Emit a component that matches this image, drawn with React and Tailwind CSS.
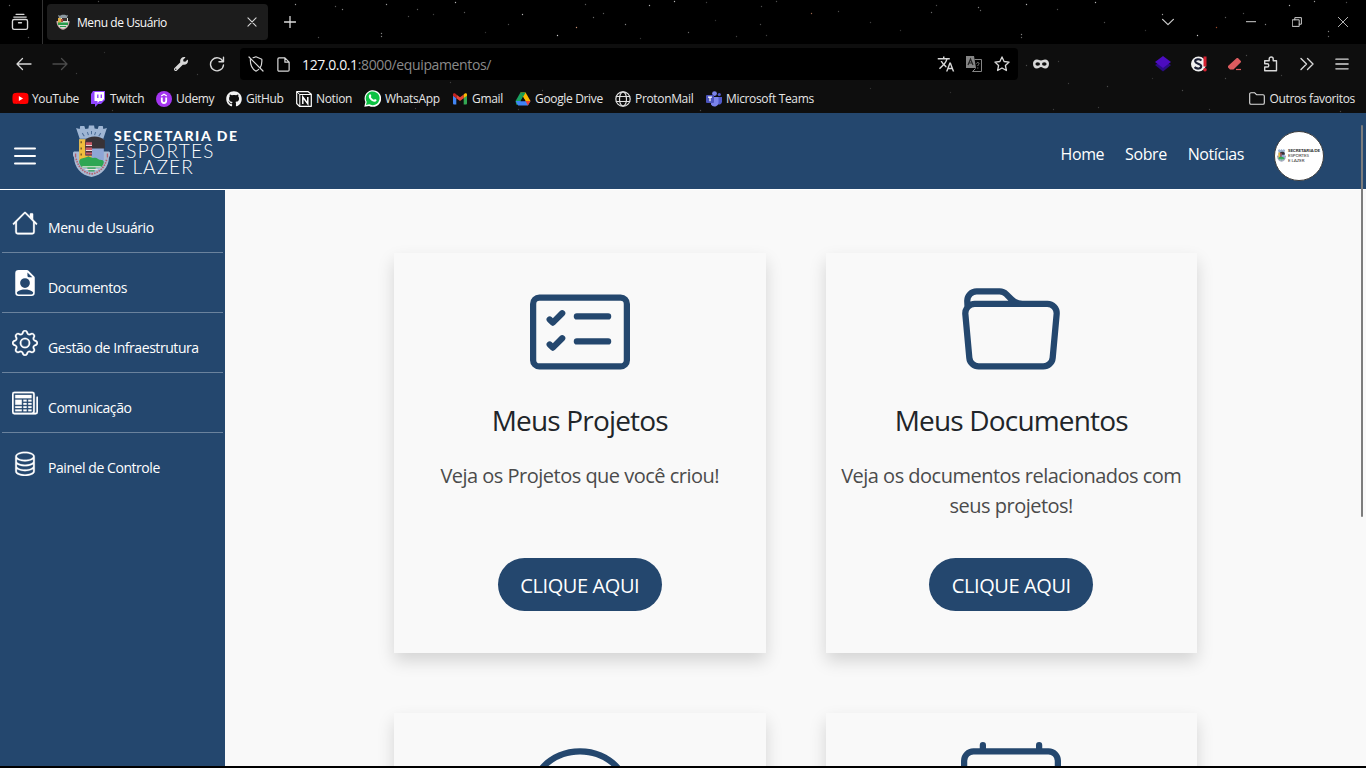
import React from "react";
import {
  BsFileEarmarkPersonFill, BsGear, BsNewspaper, BsDatabase, BsCardChecklist,
  BsFolder, BsChat, BsCalendar4,
} from "react-icons/bs";
import { FaYoutube, FaGithub, FaWrench } from "react-icons/fa";
import { MdTranslate } from "react-icons/md";

const STARS = [
  [386, 4, 0.6], [455, 2, 0.7], [522, 14, 0.7], [585, 4, 0.35], [576, 27, 0.9, "#e0a080"], [557, 35, 0.8], [593, 17, 0.4],
  [603, 13, 0.35], [649, 5, 0.7], [674, 1, 0.7], [625, 24, 0.5], [381, 33, 0.5], [381, 36, 0.5], [417, 9, 0.35], [408, 16, 0.3],
  [342, 9, 0.5], [464, 12, 0.35], [433, 14, 0.25], [508, 24, 0.3], [688, 32, 0.4], [706, 2, 0.25], [761, 6, 0.3], [811, 13, 0.8, "#c08060"],
  [776, 1, 0.3], [760, 24, 0.3], [766, 35, 0.25], [736, 36, 0.25], [838, 11, 0.3], [295, 4, 0.6], [335, 6, 0.35], [318, 37, 0.3],
  [98, 1, 0.3], [9, 5, 0.4], [28, 37, 0.3], [931, 12, 0.4], [980, 10, 0.4], [978, 7, 0.5], [1026, 4, 0.7], [1021, 34, 0.5],
  [1021, 37, 0.4], [1057, 9, 0.3], [1095, 2, 0.7], [1104, 22, 0.3], [1162, 14, 0.6], [1197, 35, 0.8], [1216, 27, 0.9, "#b05030"],
  [1289, 5, 0.7], [1314, 1, 0.6], [1265, 24, 0.5], [1328, 31, 0.5], [1328, 36, 0.4], [1225, 17, 0.35], [1346, 2, 0.3], [1243, 13, 0.3],
  [870, 22, 0.25], [900, 30, 0.2], [936, 5, 0.3], [485, 32, 0.2], [640, 38, 0.2], [715, 20, 0.2], [1145, 30, 0.2],
  [76, 73, 0.2], [197, 74, 0.2], [104, 52, 0.15], [112, 110, 0.2], [415, 108, 0.2], [518, 109, 0.2], [542, 90, 0.2], [700, 110, 0.25],
  [450, 82, 0.2], [1026, 65, 0.25], [1058, 61, 0.2], [1068, 83, 0.2], [1107, 86, 0.25], [1182, 90, 0.25], [1225, 78, 0.25], [1246, 55, 0.25],
  [1098, 107, 0.2], [1053, 109, 0.2], [1209, 109, 0.2], [1281, 75, 0.2], [1340, 111, 0.25], [1152, 78, 0.15], [950, 92, 0.15], [870, 88, 0.15],
];

function Stars() {
  return (
    <svg className="pointer-events-none absolute inset-0" width="1366" height="113" aria-hidden="true">
      {STARS.map(([x, y, o, c], i) => (
        <circle key={i} cx={x + 0.5} cy={y + 0.5} r="0.7" fill={c || "#ffffff"} opacity={o} />
      ))}
    </svg>
  );
}

function Stroke({ size = 16, width = 1.3, className = "", children }) {
  return (
    <svg width={size} height={size} viewBox="0 0 16 16" fill="none" stroke="currentColor" strokeWidth={width}
      strokeLinecap="round" strokeLinejoin="round" className={"shrink-0 " + className}>
      {children}
    </svg>
  );
}

function Crest({ className }) {
  return (
    <svg viewBox="0 0 36 52" className={className} preserveAspectRatio="none">
      <path d="M3 3l3.500 1 .5-3 4 0 1 3 3-.5.500-3h5l.5 3 3 .5 1-3 4 0 .5 3 3.500-1-3.500 10.500H6.500z" fill="#9fb6d4" />
      <path d="M9 8l2 3M14 7l1 3M22 7l-1 3M27 8l-2 3M18 6v3" stroke="#4d6d96" strokeWidth="1" />
      <path d="M1 26c-2 1-1 5 0 6 0 9 7 18 17 19 10-1 17-10 17-19 1-1 2-5 0-6z" fill="#a9bad2" />
      <path d="M3 33c2 8 7 14 15 15 8-1 13-7 15-15" fill="none" stroke="#b6606e" strokeWidth="1.600" strokeDasharray="1.500 1" />
      <path d="M2.500 28v4M33.500 28v4" stroke="#b6606e" strokeWidth="1.300" />
      <path d="M6 14h24v20c0 6-6 10-12 11-6-1-12-5-12-11z" fill="#8fa6d6" />
      <path d="M11 15c5-5 15-5 20 0v8H11z" fill="#383236" />
      <path d="M6 14h6v16h6v5H6z" fill="#f0be3c" />
      <path d="M8 16v2M8 22v2M8 28v2M15 31v2" stroke="#80602b" strokeWidth="1.500" />
      <path d="M12 16h6.500v14H12z" fill="#46303a" />
      <path d="M12.500 17h6v2.500h-6zM12.500 22h6v2.500h-6zM12.500 27h6v2h-6z" fill="#c85a66" />
      <path d="M12.500 19.500h6v1h-6zM12.500 24.500h6v1h-6z" fill="#e8d9d9" />
      <path d="M6 36c1-4 4-3 6-4s4-1 6 0 4-1 6 1 5 0 6 3c0 3-2 5-4 6H10c-2-1-4-3-4-6z" fill="#2ea653" />
      <path d="M9 41h18M12 43.500h12" stroke="#e9e9e0" strokeWidth="1.300" />
      <path d="M14 42.300h8M15 45h6" stroke="#2ea653" strokeWidth="1.200" />
    </svg>
  );
}

function Favicon() {
  return (
    <svg width="16" height="16" viewBox="0 0 16 16" className="shrink-0">
      <path d="M3 1l2 .8L7 .8h3l1.500.8L13 1l-1 3H4z" fill="#8b98a0" />
      <path d="M1.500 7h13c0 5-3 8-6.500 8.800C4.500 15 1.500 12 1.500 7z" fill="#c9a9a9" />
      <path d="M3 4h10v5c0 3-2 4.500-5 5.500C5 13.500 3 12 3 9z" fill="#d8e3d8" />
      <path d="M7 4h5v3H7z" fill="#3d3430" /><path d="M3 4h3v5H3z" fill="#e2b04a" /><path d="M6 5h2v3H6z" fill="#b64c3e" />
      <path d="M3 8.500h10v2.500H3zM5 12h6v1H5z" fill="#289a4a" />
    </svg>
  );
}

const TwitchIcon = () => (
  <svg width="16" height="16" viewBox="0 0 16 16"><path d="M3 0h12v9l-4 4H8l-3 3v-3H1V3z" fill="#9146ff" /><path d="M4.500 1H14v7l-2 2H9.500L7.500 12v-2h-3z" fill="#fff" /><path d="M7.800 3.500v3.500M11.300 3.500v3.500" stroke="#9146ff" strokeWidth="1.400" /></svg>
);
const UdemyIcon = () => (
  <svg width="16" height="16" viewBox="0 0 16 16"><circle cx="8" cy="8" r="8" fill="#a435f0" /><path d="M5.200 5L8 3.300 10.800 5" stroke="#fff" strokeWidth="1.300" fill="none" /><path d="M5.800 6.500v3.300a2.200 2.200 0 0 0 4.400 0V6.500" stroke="#fff" strokeWidth="1.800" fill="none" /></svg>
);
const NotionIcon = () => (
  <svg width="16" height="16" viewBox="0 0 16 16"><path d="M.7.700h11.500l3.100 2.500v12.100H3.500L.7 12.500z" fill="#111" stroke="#fff" strokeWidth="1.200" strokeLinejoin="round" /><path d="M1 1l2.800 2.500h11.500M3.800 3.500v11.500" stroke="#fff" fill="none" /><path d="M6.800 13V6l5 6.800V6" stroke="#fff" strokeWidth="1.500" fill="none" /></svg>
);
const WhatsIcon = () => (
  <svg width="17" height="17" viewBox="0 0 16 16" className="-ml-px shrink-0"><path d="M.3 15.700l1-4.300A7.800 7.800 0 1 1 4.800 15z" fill="#fff" /><path d="M1.800 14.200l.8-3A6.500 6.500 0 1 1 5 13.500z" fill="#0dc143" /><path d="M5.200 4.300c.8-.6 1.200-.1 1.700 1.200.2.500-.5.800-.4 1.200.6 1.200 1.500 2 2.700 2.500.4.100.8-.9 1.200-.8 1.400.6 1.700.8 1.300 1.700-.6 1.300-2.600 1.200-4.500-.1C5 8.700 3.600 6 5.200 4.300z" fill="#fff" /></svg>
);
const GmailIcon = () => (
  <svg width="16" height="16" viewBox="0 0 16 16"><path d="M1 4.500l3.300 2.500v6.500H2a1 1 0 0 1-1-1z" fill="#4285f4" /><path d="M15 4.500L11.700 7v6.500H14a1 1 0 0 0 1-1z" fill="#34a853" /><path d="M4.300 3.400L8 6.200l3.700-2.800V7.200L8 10 4.300 7.200z" fill="#ea4335" /><path d="M1 3.600C1 2.300 2.500 1.900 3.500 2.700l.8.700v3.800L1 4.800z" fill="#c5221f" /><path d="M15 3.600c0-1.300-1.500-1.700-2.500-.9l-.8.700v3.800L15 4.800z" fill="#fbbc04" /></svg>
);
const DriveIcon = () => (
  <svg width="16" height="16" viewBox="0 0 16 16"><path d="M5.400 1.500L8 6 3.600 14 1.200 13.500.6 10z" fill="#1aa260" /><path d="M5.400 1.500h5.200l4.900 8.600h-5L8 6z" fill="#ffba00" /><path d="M5.400 1.500h5.200L8 6z" fill="#0f9d58" /><path d="M.6 10h14.900l-2.600 4.400H3.200z" fill="#3f83f8" /><path d="M8 6l2.500 4.200h-5z" fill="#0e0e0e" /><path d="M10.500 10h5l-2.600 4.400z" fill="#ea4335" /></svg>
);
const GlobeIcon = () => (
  <Stroke width={1.2} className="text-[#e0e0e0]"><circle cx="8" cy="8" r="7.200" /><ellipse cx="8" cy="8" rx="3.500" ry="7.200" /><path d="M1.300 5.500h13.400M1.300 10.500h13.400" /></Stroke>
);
const TeamsIcon = () => (
  <svg width="16" height="16" viewBox="0 0 16 16"><circle cx="8.500" cy="2.600" r="2.400" fill="#7b83eb" /><circle cx="13.300" cy="3.500" r="1.600" fill="#5059c9" /><path d="M11 6h5v4.500a3 3 0 0 1-4 2.800z" fill="#5059c9" /><path d="M5 6h7.500v5.500a4 4 0 0 1-7.500 2z" fill="#7b83eb" /><rect x="0" y="4" width="8" height="8" rx="1" fill="#4b53bc" /><path d="M2 6.200h4M4 6.200V10.300" stroke="#fff" strokeWidth="1.200" /></svg>
);
const FolderSmall = () => (
  <Stroke width={1.1} className="text-[#e0e0e0]"><path d="M.7 12V3A1.300 1.300 0 0 1 2 1.700h3.500L7.500 3.700H14A1.300 1.300 0 0 1 15.300 5v7a1.300 1.300 0 0 1-1.300 1.300H2A1.300 1.300 0 0 1 .7 12z" /></Stroke>
);

const BOOKMARKS = [
  ["YouTube", "w-[78px]", <FaYoutube size={17} color="#ff0000" key="i" className="shrink-0 bg-[radial-gradient(circle,#fff_25%,transparent_26%)]" />],
  ["Twitch", "w-[66px]", <TwitchIcon key="i" />],
  ["Udemy", "w-[70px]", <UdemyIcon key="i" />],
  ["GitHub", "w-[70px]", <FaGithub size={16} color="#f2f2f2" key="i" />],
  ["Notion", "w-[69px]", <NotionIcon key="i" />],
  ["WhatsApp", "w-[87px]", <WhatsIcon key="i" />],
  ["Gmail", "w-[63px]", <GmailIcon key="i" />],
  ["Google Drive", "w-[100px]", <DriveIcon key="i" />],
  ["ProtonMail", "w-[91px]", <GlobeIcon key="i" />],
  ["Microsoft Teams", "w-[110px]", <TeamsIcon key="i" />],
];

function TabStrip() {
  return (
    <div className="flex h-[44px] items-center">
      <div className="flex h-full w-[43px] items-center border-r border-[#333] pl-[11px] text-[#d8d8d8]">
        <Stroke size={18} width={1.2}>
          <path d="M4.500 1.200h7M2.500 3.600h11" /><rect x="1.300" y="5.800" width="13.400" height="8.700" rx="1.500" /><path d="M6.700 8.700h2.600" />
        </Stroke>
      </div>
      <div className="ml-1 flex h-9 w-[221px] items-center rounded bg-[#1c1c1c] pl-2 pr-[11px]">
        <Favicon />
        <span className="ml-1.5 grow pt-px text-[12px] tracking-[-0.42px] text-[#fafafa]">Menu de Usuário</span>
        <Stroke size={10} width={1.7} className="text-[#d8d8d8]"><path d="M1.500 1.500l13 13M14.500 1.500l-13 13" /></Stroke>
      </div>
      <Stroke size={12} width={1.7} className="ml-4 text-[#dcdcdc]"><path d="M8 .5v15M.5 8h15" /></Stroke>
      <div className="ml-auto flex items-center text-[#cfcfcf]">
        <Stroke size={12} width={1.6} className="mr-[72px]"><path d="M.8 4.500L8 11.500l7.200-7" /></Stroke>
        <Stroke size={10} width={1.6} className="mr-[36px]"><path d="M.5 7.500h15" /></Stroke>
        <Stroke size={10} width={1.6} className="mr-[36px]"><path d="M1 4.500h10.500V15H1zM4.500 4.500V1H15v10.500h-3.500" /></Stroke>
        <Stroke size={10} width={1.4} className="mr-[18px]"><path d="M.5.5l15 15M15.500.5l-15 15" /></Stroke>
      </div>
    </div>
  );
}

function AddressBar() {
  return (
    <div className="flex h-10 items-center text-[#d8d8d8]">
      <Stroke className="ml-4" width={1.3}><path d="M1 8h14M6.500 2.500L1 8l5.500 5.500" /></Stroke>
      <Stroke className="ml-5 text-[#4b4b4b]" width={1.3}><path d="M1 8h14M9.500 2.500L15 8l-5.500 5.500" /></Stroke>
      <FaWrench size={14} className="ml-[106px]" />
      <Stroke className="ml-[21px]" width={1.4}><path d="M13.900 5.500A6.500 6.500 0 1 0 14.500 9M14.500 1.300v4.500H10" /></Stroke>
      <div className="ml-[15px] flex h-8 w-[778px] items-center rounded bg-black pl-2">
        <Stroke width={1.2}><path d="M1 1l14 14M5 1.700L8 .8l5.800 2.400c.3 3.600-.2 6.300-1.700 8.600M2.300 3.500c0 6 1.500 9.500 5.700 11.600 1-.4 1.900-1 2.600-1.700" /></Stroke>
        <Stroke size={15} className="ml-3" width={1.3}><path d="M9.500 1H3.200A1.200 1.200 0 0 0 2 2.200v11.600A1.200 1.200 0 0 0 3.200 15h9.600a1.200 1.200 0 0 0 1.200-1.200V5.500zM9.500 1v4.500H14" /></Stroke>
        <span className="ml-[11px] grow pt-px text-[14px] tracking-[-0.37px] text-[#8a8a8a]"><span className="text-[#f5f5f5]">127.0.0.1</span>:8000/equipamentos/</span>
        <MdTranslate size={18} />
        <svg width="16" height="16" viewBox="0 0 16 16" className="ml-[11px]">
          <path d="M0 0h8l2 12H0z" fill="#858585" /><path d="M2 9L4.500 3 7 9M3 7h3" stroke="#222" strokeWidth="1.200" fill="none" />
          <path d="M8.500 3.500h7v12H6.500l3-3" stroke="#858585" fill="none" /><path d="M10.500 7.500c.5-1.500 3-1 2.500.5-.3.800-1.200.8-1.200 2M11.800 11.500v1" stroke="#858585" fill="none" />
        </svg>
        <Stroke className="ml-3 mr-2" width={1.3}><path d="M8 .9l2.100 4.600 5 .6-3.700 3.400 1 5L8 12l-4.400 2.500 1-5L.9 6.100l5-.6z" /></Stroke>
      </div>
      <svg width="16" height="16" viewBox="0 0 16 16" className="ml-[15px]"><path d="M4 3.500c1.700 0 2.500 1 4 1s2.300-1 4-1c2.500 0 4 1.700 4 4.300 0 2.900-1.500 4.700-3.700 4.700C10 12.500 9.500 11 8 11s-2 1.500-4.300 1.500C1.500 12.500 0 10.700 0 7.800 0 5.200 1.500 3.500 4 3.500z" fill="#d8d8d8" /><ellipse cx="4.700" cy="8" rx="2.300" ry="1.700" fill="#0e0e0e" /><ellipse cx="11.300" cy="8" rx="2.300" ry="1.700" fill="#0e0e0e" /></svg>
      <div className="ml-auto mr-[17px] flex items-center gap-5">
        <svg width="16" height="16" viewBox="0 0 16 16"><path d="M0 9l8-5 8 5-8 6.500z" fill="#2b0c85" /><path d="M0 6l8-6 8 6-8 6z" fill="#4c0cc0" /></svg>
        <svg width="16" height="16" viewBox="0 0 16 16"><circle cx="7.500" cy="8" r="7.500" fill="#f1f1f1" /><path d="M10.500 4.500C8 2.500 4 3 4.200 5.500c.2 2.500 6 2 6 4.800 0 2.700-4.400 2.900-6.700.8" stroke="#1b2036" strokeWidth="2.200" fill="none" /><path d="M14 .5v10" stroke="#d42030" strokeWidth="3" /><circle cx="14" cy="13.800" r="1.800" fill="#d42030" /></svg>
        <svg width="16" height="16" viewBox="0 0 16 16"><path d="M1 10L9.500 2.300c.6-.5 1.300-.5 1.900.1l2.200 2.300c.6.600.6 1.300 0 1.900L6.500 13.500H3L1 11.500z" fill="#dc5c5f" /><path d="M9 13.500h5" stroke="#dc5c5f" strokeWidth="1.200" /></svg>
        <Stroke width={1.4}><path d="M1.700 14.800V11h2.500a1.600 1.600 0 0 0 0-3.200H1.700V4.800h4.500V3a2 2 0 0 1 4 0v1.800h3.300v10z" /></Stroke>
        <Stroke width={1.4}><path d="M2 2.500L7.500 8 2 13.500M8.500 2.500L14 8l-5.500 5.500" /></Stroke>
        <Stroke size={14} width={1.5}><path d="M1 2.500h14M1 8h14M1 13.500h14" /></Stroke>
      </div>
    </div>
  );
}

function Browser() {
  return (
    <header className="relative h-[113px] shrink-0 bg-[linear-gradient(#000_44px,#0e0e0e_44px)]">
      <Stars />
      <div className="relative">
        <TabStrip />
        <AddressBar />
        <div className="flex h-[29px] items-center pl-3 text-[12px] tracking-[-0.34px] text-[#e6e6e6]">
          {BOOKMARKS.map(([label, width, icon]) => (
            <div key={label} className={"flex shrink-0 items-center whitespace-nowrap " + width}>
              <span className="mr-1 flex w-4 shrink-0">{icon}</span>{label}
            </div>
          ))}
          <div className="ml-auto mr-[11px] flex items-center gap-1"><FolderSmall />Outros favoritos</div>
        </div>
      </div>
    </header>
  );
}

function HouseIcon() {
  return (
    <svg width="26" height="26" viewBox="0 0 16 16" fill="currentColor" stroke="currentColor" strokeWidth="0.150">
      <path d="M2 13.500V7h1v6.500a.5.500 0 0 0 .5.500h9a.5.500 0 0 0 .5-.5V7h1v6.500a1.500 1.500 0 0 1-1.500 1.500h-9A1.500 1.500 0 0 1 2 13.500zm11-11V6l-2-2V2.500a.5.500 0 0 1 .5-.5h1a.5.500 0 0 1 .5.500z" />
      <path d="M7.293 1.500a1 1 0 0 1 1.414 0l6.647 6.646a.5.500 0 0 1-.708.708L8 2.207 1.354 8.854a.5.500 0 1 1-.708-.708L7.293 1.500z" />
    </svg>
  );
}

const MENU = [
  ["Menu de Usuário", <HouseIcon key="i" />],
  ["Documentos", <BsFileEarmarkPersonFill size={26} key="i" />],
  ["Gestão de Infraestrutura", <BsGear size={26} strokeWidth={0.15} key="i" />],
  ["Comunicação", <BsNewspaper size={26} strokeWidth={0.15} key="i" />],
  ["Painel de Controle", <BsDatabase size={26} strokeWidth={0.15} key="i" />],
];

function Sidebar() {
  return (
    <nav className="w-[225px] shrink-0 bg-[#24476e] px-0.5 pt-[3px] text-white">
      {MENU.map(([label, icon]) => (
        <a key={label} className="flex h-[60px] border-b border-[#6a829d] pl-2.5 pt-[17px] last:border-b-0">
          <span className="h-[26px] w-[26px]">{icon}</span>
          <span className="ml-2.5 mt-[8px] whitespace-nowrap text-[14px] leading-[20px] tracking-[-0.44px]">{label}</span>
        </a>
      ))}
    </nav>
  );
}

function LogoText({ small }) {
  return small ? (
    <div className="whitespace-nowrap font-['Lato',sans-serif] text-[4.500px] leading-[5px] tracking-[-0.1px] text-[#333]">
      <div className="font-black">SECRETARIA DE</div>
      <div>ESPORTES</div>
      <div>E LAZER</div>
    </div>
  ) : (
    <div className="whitespace-nowrap font-['Lato',sans-serif] text-white">
      <div className="text-[14px] font-black leading-[15px] tracking-[1.6px]">SECRETARIA DE</div>
      <div className="text-[19px] font-light leading-[16px] tracking-[1.3px]">ESPORTES</div>
      <div className="text-[19px] font-light leading-[15px] tracking-[1.1px]">E LAZER</div>
    </div>
  );
}

function SiteHeader() {
  return (
    <div className="flex h-[77px] shrink-0 items-center border-b border-white bg-[#24476e] text-white">
      <svg width="22" height="18" viewBox="0 0 22 18" className="ml-[14px] mt-2.5"><path d="M1 1.500h20M1 9h20M1 16.500h20" stroke="#fff" strokeWidth="2" strokeLinecap="round" /></svg>
      <Crest className="ml-[37px] h-[53px] w-[37px]" />
      <div className="ml-1"><LogoText /></div>
      <div className="ml-auto mr-[30px] mt-[5px] flex gap-[21px] text-[16px] leading-6 tracking-[-0.42px]">
        <a>Home</a><a>Sobre</a><a>Notícias</a>
      </div>
      <div className="mr-[42px] mt-[9px] flex h-[50px] w-[50px] items-center gap-0.5 overflow-hidden rounded-full border border-[#3c3c3c] bg-white pl-0.5">
        <Crest className="h-[13px] w-[9px] shrink-0" /><LogoText small />
      </div>
    </div>
  );
}

function Card({ icon, title, text }) {
  return (
    <div className="flex h-[400px] flex-col items-center bg-[#f9f9f9] pt-[29px] text-center shadow-[0_8px_16px_rgba(0,0,0,0.15)]">
      <span className="h-[100px] text-[#24476e]">{icon}</span>
      {title && (
        <>
          <h2 className="mt-[21px] text-[28px] leading-[34px] tracking-[-0.83px] text-[#212529]">{title}</h2>
          <p className="mt-[24px] h-[60px] text-[20px] leading-[30px] tracking-[-0.51px] text-[#4b4b4b]">{text}</p>
          <button className="mt-[37px] h-[53px] w-[164px] rounded-full bg-[#24476e] pt-0.5 text-[20px] tracking-[-0.4px] text-white">CLIQUE AQUI</button>
        </>
      )}
    </div>
  );
}

export default function App() {
  return (
    <div className="flex h-[768px] w-[1366px] flex-col overflow-hidden bg-black font-['Open_Sans','Noto_Sans',sans-serif]">
      <Browser />
      <div className="relative flex h-[653px] shrink-0 flex-col overflow-hidden">
        <SiteHeader />
        <div className="flex min-h-0 grow">
          <Sidebar />
          <main className="grow overflow-hidden bg-[#f9f9f9] pl-[169px] pt-[63px]">
            <div className="grid w-[803px] grid-cols-2 gap-[60px]">
              <Card icon={<BsCardChecklist size={100} />} title="Meus Projetos" text="Veja os Projetos que você criou!" />
              <Card icon={<BsFolder size={100} />} title="Meus Documentos" text={<>Veja os documentos relacionados com<br />seus projetos!</>} />
              <Card icon={<BsChat size={100} />} />
              <Card icon={<BsCalendar4 size={100} />} />
            </div>
          </main>
        </div>
        <div className="absolute right-[3px] top-[12px] h-[392px] w-0.5 rounded bg-[#7d7d7d]" />
      </div>
    </div>
  );
}
